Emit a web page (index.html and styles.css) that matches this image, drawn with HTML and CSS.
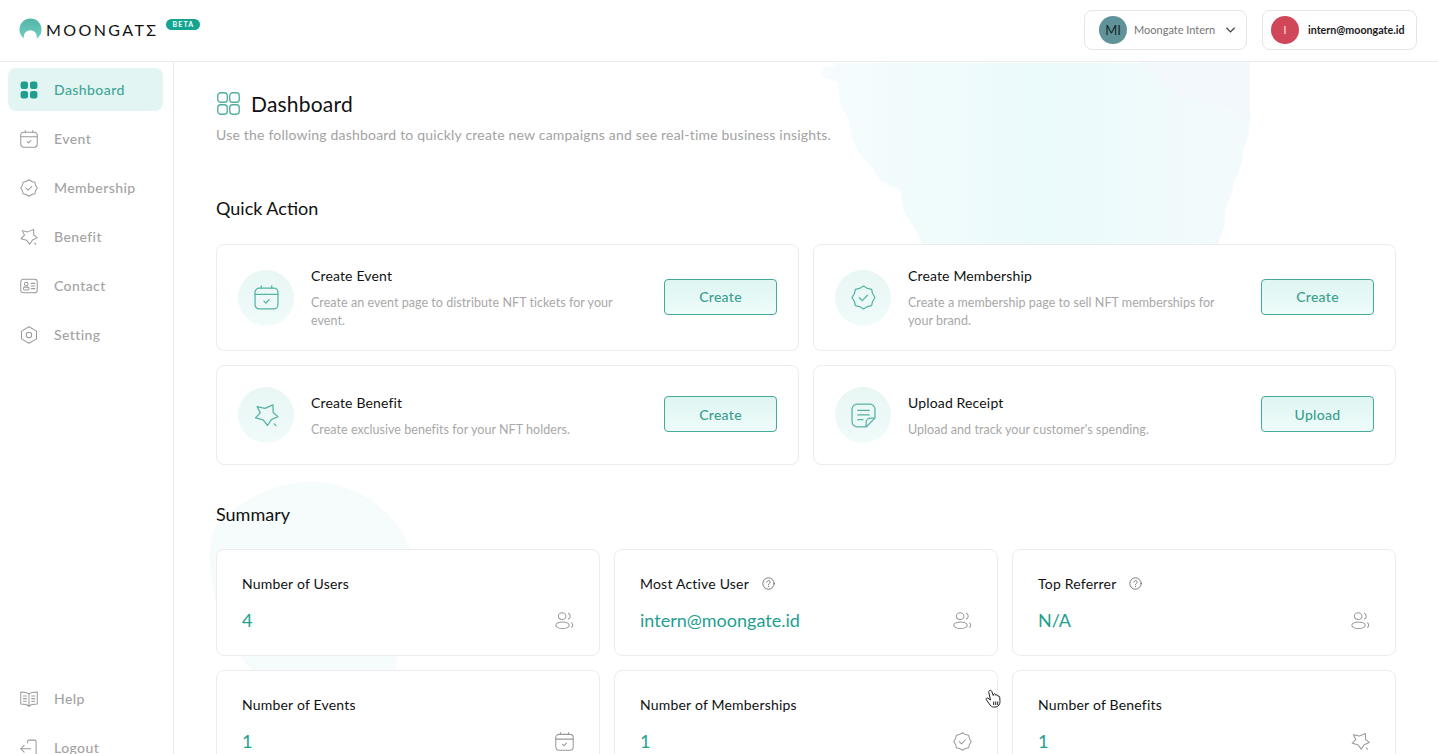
FILE: index.html
```html
<!DOCTYPE html>
<html lang="en">
<head>
<meta charset="utf-8">
<title>Moongate Dashboard</title>
<link rel="stylesheet" href="styles.css">
</head>
<body>
<svg class="sprite" aria-hidden="true">
  <symbol id="i-grid" viewBox="0 0 24 24"><rect x=".8" y=".8" width="9.900" height="9.900" rx="3"/><rect x="13.300" y=".8" width="9.900" height="9.900" rx="3"/><rect x=".8" y="13.300" width="9.900" height="9.900" rx="3"/><rect x="13.300" y="13.300" width="9.900" height="9.900" rx="3"/></symbol>
  <symbol id="i-cal" viewBox="0 0 24 24"><rect x="1" y="3" width="22" height="20" rx="4"/><path d="M1 9h22M7 .8v2.200M17 .8v2.200M9.500 15.500l2 1.800 3-3.200"/></symbol>
  <symbol id="i-badge" viewBox="0 0 24 24"><path d="M12 1 15.800 3.300 19.800 4.200 20.700 8.200 23 12 20.700 15.800 19.800 19.800 15.800 20.700 12 23 8.200 20.700 4.200 19.800 3.300 15.800 1 12 3.300 8.200 4.200 4.200 8.200 3.300Z"/><path d="M8 12.200l2.800 2.800 5-5.200"/></symbol>
  <symbol id="i-star" viewBox="0 0 24 24"><path d="M3 3.500 10.500 5.200 18.200 1.800 18.400 9.200 23 13.200 16.600 16 13 21.600 8.800 16.200 1.500 14.200 6 9.500Z"/><path d="M19.500 20l1.600 1.800"/></symbol>
  <symbol id="i-contact" viewBox="0 0 24 24"><rect x="1" y="3" width="22" height="18" rx="3.500"/><circle cx="8.300" cy="9.300" r="2.400"/><rect x="4.500" y="13.500" width="7.600" height="3.800" rx="1.900"/><path d="M15 8.500h4.800M15 12h4.800M15 15.500h4.800"/></symbol>
  <symbol id="i-hex" viewBox="0 0 24 24"><path d="M12 1 22 6.800V17.200L12 23 2 17.200V6.800Z"/><circle cx="12" cy="12" r="3.600"/></symbol>
  <symbol id="i-book" viewBox="0 0 24 24"><path d="M12 5.500C9.500 3.500 5.500 2.800 1 2.800V18.800C5.500 18.800 9.500 19.500 12 21.800 14.500 19.500 18.500 18.800 23 18.800V2.800C18.500 2.800 14.500 3.500 12 5.500ZM12 5.500V21.800M4.500 8h4M4.500 11.500h4M4.500 15h4M15.500 8h4M15.500 11.500h4M15.500 15h4"/></symbol>
  <symbol id="i-logout" viewBox="0 0 24 24"><path d="M10 5V3.500A2 2 0 0 1 12 1.500H19.500A2 2 0 0 1 21.500 3.500V23M1 13H14M5.500 8.500 1 13 5.500 17.500"/></symbol>
  <symbol id="i-users" viewBox="0 0 24 24"><ellipse cx="9" cy="6.500" rx="4.800" ry="4.200"/><ellipse cx="9.500" cy="18" rx="8.500" ry="4.200"/><path d="M17 2.800a4.200 4.200 0 0 1 0 7.400M21 15a3.500 3.500 0 0 1 0 5.500"/></symbol>
  <symbol id="i-receipt" viewBox="0 0 24 24"><path d="M14.500 23H6A5 5 0 0 1 1 18V6A5 5 0 0 1 6 1H18A5 5 0 0 1 23 6V14.500ZM23 14.500H18.500A4 4 0 0 0 14.500 18.500V23M6.500 7h11M6.500 11.500h11M6.500 16h5"/></symbol>
  <symbol id="i-help" viewBox="0 0 24 24"><circle cx="12" cy="12" r="10.500"/><path d="M9 9.500a3 3 0 1 1 4.500 2.600c-1 .6-1.500 1.200-1.500 2.200M12 17.400v.4"/></symbol>
</svg>

<div class="app">
  <header class="topbar">
    <div class="brand">
      <svg class="brand-mark" viewBox="0 0 24 24"><defs><linearGradient id="mark" x1="0" y1="0" x2="0" y2="1"><stop offset="0" stop-color="#54b4a8"/><stop offset="1" stop-color="#6fd0c3"/></linearGradient></defs><circle cx="12" cy="12" r="11.500" fill="url(#mark)"/><path class="brand-arch" d="M5 24V19.500a6.800 6.800 0 0 1 13.600 0V24Z"/></svg>
      <span class="brand-name">MOONGATΣ</span>
      <span class="brand-beta">BETA</span>
    </div>
    <div class="account">
      <div class="account-box account-org">
        <span class="avatar avatar-org">MI</span>
        <span class="org-name">Moongate Intern</span>
        <svg class="chevron" viewBox="0 0 12 8"><path d="M1.500 1.500 6 6l4.500-4.500"/></svg>
      </div>
      <div class="account-box account-user">
        <span class="avatar avatar-user">I</span>
        <span class="user-mail">intern@moongate.id</span>
      </div>
    </div>
  </header>

  <div class="layout">
    <aside class="sidebar">
      <nav class="nav">
        <a class="nav-item is-active"><svg class="nav-icon solid"><use href="#i-grid"/></svg>Dashboard</a>
        <a class="nav-item"><svg class="nav-icon"><use href="#i-cal"/></svg>Event</a>
        <a class="nav-item"><svg class="nav-icon"><use href="#i-badge"/></svg>Membership</a>
        <a class="nav-item"><svg class="nav-icon"><use href="#i-star"/></svg>Benefit</a>
        <a class="nav-item"><svg class="nav-icon"><use href="#i-contact"/></svg>Contact</a>
        <a class="nav-item"><svg class="nav-icon"><use href="#i-hex"/></svg>Setting</a>
      </nav>
      <nav class="nav nav-bottom">
        <a class="nav-item"><svg class="nav-icon"><use href="#i-book"/></svg>Help</a>
        <a class="nav-item"><svg class="nav-icon"><use href="#i-logout"/></svg>Logout</a>
      </nav>
    </aside>

    <main class="content">
      <svg class="wash wash-top" viewBox="0 0 432 182"><defs><linearGradient id="washA" x1="0" y1="0" x2="1" y2="0"><stop offset="0" stop-color="#f6fcfd"/><stop offset=".5" stop-color="#ebfafb"/><stop offset="1" stop-color="#f3fafc"/></linearGradient></defs><path d="M2 15 3 6 12 5 15 1 430 1 428 30 430 34 428 48 431 50 428 75 424 85 422 100 418 112 414 118 412 131 406 145 404 165 398 182 102 182 96 168 84 150 80 128 60 118 52 105 40 92 32 76 28 55 20 42 18 20Z" fill="url(#washA)"/><path d="M320 0H430V60L410 45 360 35Z" fill="#f3f8fd"/></svg>
      <svg class="wash wash-low" viewBox="0 0 210 195"><path d="M6 55C30 15 80 0 115 2 165 8 195 40 205 70L190 195 50 193C25 170 0 120 6 55Z" fill="#f6fbfc"/></svg>

      <div class="page-title">
        <svg class="title-icon"><use href="#i-grid"/></svg>
        <h1>Dashboard</h1>
      </div>
      <p class="page-lead">Use the following dashboard to quickly create new campaigns and see real-time business insights.</p>

      <h2 class="section-title first">Quick Action</h2>
      <section class="actions">
        <article class="card action">
          <span class="action-icon"><svg><use href="#i-cal"/></svg></span>
          <div class="action-text"><h3>Create Event</h3><p>Create an event page to distribute NFT tickets for your event.</p></div>
          <button class="action-btn">Create</button>
        </article>
        <article class="card action">
          <span class="action-icon"><svg><use href="#i-badge"/></svg></span>
          <div class="action-text"><h3>Create Membership</h3><p>Create a membership page to sell NFT memberships for your brand.</p></div>
          <button class="action-btn">Create</button>
        </article>
        <article class="card action">
          <span class="action-icon"><svg><use href="#i-star"/></svg></span>
          <div class="action-text"><h3>Create Benefit</h3><p>Create exclusive benefits for your NFT holders.</p></div>
          <button class="action-btn">Create</button>
        </article>
        <article class="card action">
          <span class="action-icon"><svg><use href="#i-receipt"/></svg></span>
          <div class="action-text"><h3>Upload Receipt</h3><p>Upload and track your customer's spending.</p></div>
          <button class="action-btn">Upload</button>
        </article>
      </section>

      <h2 class="section-title">Summary</h2>
      <section class="stats">
        <article class="card stat">
          <div class="stat-label">Number of Users</div>
          <div class="stat-row"><span class="stat-value">4</span><svg class="stat-icon"><use href="#i-users"/></svg></div>
        </article>
        <article class="card stat">
          <div class="stat-label">Most Active User<svg class="help-icon"><use href="#i-help"/></svg></div>
          <div class="stat-row"><span class="stat-value">intern@moongate.id</span><svg class="stat-icon"><use href="#i-users"/></svg></div>
        </article>
        <article class="card stat">
          <div class="stat-label">Top Referrer<svg class="help-icon"><use href="#i-help"/></svg></div>
          <div class="stat-row"><span class="stat-value">N/A</span><svg class="stat-icon"><use href="#i-users"/></svg></div>
        </article>
        <article class="card stat">
          <div class="stat-label">Number of Events</div>
          <div class="stat-row"><span class="stat-value">1</span><svg class="stat-icon"><use href="#i-cal"/></svg></div>
        </article>
        <article class="card stat">
          <div class="stat-label">Number of Memberships</div>
          <div class="stat-row"><span class="stat-value">1</span><svg class="stat-icon"><use href="#i-badge"/></svg></div>
        </article>
        <article class="card stat">
          <div class="stat-label">Number of Benefits</div>
          <div class="stat-row"><span class="stat-value">1</span><svg class="stat-icon"><use href="#i-star"/></svg></div>
        </article>
      </section>
    </main>
  </div>

  <svg class="cursor" viewBox="0 0 16 20"><path d="M4.500 1.500c1-.6 2 0 2.300 1l1.500 4 .2-1c.3-1 1.800-1 2.100.1l.2.800c.4-.9 1.700-.8 2 .2l.2.800c.6-.6 1.600-.2 1.700.7l.3 4.400c.1 2.800-1.500 5-4.200 5.500H8.500c-1.500 0-2.600-.7-3.400-2L1.200 10.500c-.5-1 .7-2 1.700-1.300L5.500 11 3.800 3.400c-.2-.8.100-1.500.7-1.900Z"/><path d="M8.700 12.500v3.500M10.700 12.500v3.500M12.700 12.500v3.500"/></svg>
</div>
</body>
</html>
```

FILE: styles.css
```css
* { box-sizing: border-box; }
html, body { margin: 0; height: 100%; overflow: hidden; background: #fff; }
body { font-family: "Lato", "Liberation Sans", sans-serif; color: #111; }
h1, h2, h3, p { margin: 0; font-weight: 400; }
.sprite { display: none; }

.app { position: relative; height: 784px; display: flex; flex-direction: column; }

/* top bar */
.topbar { height: 62px; flex: none; display: flex; align-items: center; justify-content: space-between; padding: 0 21px 2px 19px; border-bottom: 1px solid #ebebeb; background: #fff; }
.brand { display: flex; align-items: center; }
.brand-mark { width: 23px; height: 23px; display: block; }
.brand-arch { fill: #fff; }
.brand-name { margin-left: 4px; font-size: 16px; letter-spacing: 2.4px; font-weight: 400; color: #111; white-space: nowrap; }
.brand-beta { margin: -10px 0 0 8px; width: 34px; height: 11px; border-radius: 6px; background: #12a58f; color: #fff; font-size: 7px; font-weight: 700; letter-spacing: 1.1px; line-height: 11px; text-align: center; }
.account { display: flex; gap: 15px; }
.account-box { height: 40px; display: flex; align-items: center; border: 1px solid #e6e6e6; border-radius: 8px; background: #fff; }
.account-org { width: 163px; padding: 0 10px 0 14px; }
.account-user { width: 155px; padding-left: 8px; }
.avatar { width: 28px; height: 28px; border-radius: 50%; flex: none; display: flex; align-items: center; justify-content: center; font-size: 13px; }
.avatar-org { background: #5f9299; color: #14282b; }
.avatar-user { background: #d0475a; color: #f5d5da; font-size: 12px; }
.org-name { margin-left: 7px; font-size: 11px; color: #757575; white-space: nowrap; }
.chevron { margin-left: auto; width: 11px; height: 8px; fill: none; stroke: #444; stroke-width: 1.4; }
.user-mail { margin-left: 9px; font-size: 10.7px; font-weight: 700; color: #1a1a1a; white-space: nowrap; }

.layout { flex: 1; display: flex; min-height: 0; }

/* sidebar */
.sidebar { width: 174px; flex: none; display: flex; flex-direction: column; justify-content: space-between; padding: 6px 10px 0 8px; border-right: 1px solid #ececec; background: #fff; }
.nav { display: flex; flex-direction: column; gap: 6px; }
.nav-bottom { padding-bottom: 15px; }
.nav-item { height: 43px; display: flex; align-items: center; gap: 16px; padding-left: 12px; border-radius: 8px; font-size: 14px; font-weight: 500; color: #a3a3a3; letter-spacing: .42px; }
.nav-icon { width: 18px; height: 18px; flex: none; fill: none; stroke: #9a9a9a; stroke-width: 1.35; stroke-linejoin: round; stroke-linecap: round; }
.nav-item.is-active { background: #e2f5f2; color: #3fa597; }
.nav-icon.solid { fill: #1f9e8e; stroke: none; }

/* main */
.content { position: relative; flex: 1; min-width: 0; padding: 29px 42px 0 42px; overflow: hidden; }
.wash { position: absolute; display: block; }
.wash-top { left: 646px; top: 0; width: 432px; height: 182px; }
.wash-low { left: 31px; top: 418px; width: 210px; height: 195px; }
.page-title { position: relative; display: flex; align-items: center; gap: 11px; height: 24px; }
.title-icon { width: 23px; height: 23px; flex: none; margin-left: 1px; fill: none; stroke: #4fae9f; stroke-width: 1.4; }
.page-title h1 { font-size: 21px; color: #111; letter-spacing: .2px; }
.page-lead { position: relative; margin-top: 11px; font-size: 14px; line-height: 18px; color: #a3a3a3; white-space: nowrap; letter-spacing: .2px; }
.section-title { position: relative; margin-top: 37px; font-size: 18px; line-height: 24px; color: #111; }
.section-title.first { margin-top: 52px; }

.card { position: relative; background: #fff; border: 1px solid #ececec; border-radius: 8px; }

.actions { position: relative; margin-top: 24px; display: grid; grid-template-columns: 1fr 1fr; gap: 14px; }
.action { display: flex; align-items: center; padding: 21px 21px; }
.action-icon { width: 56px; height: 56px; flex: none; border-radius: 50%; background: linear-gradient(#e8f6f4, #f0fbfa); display: flex; align-items: center; justify-content: center; }
.action-icon svg { width: 25px; height: 25px; fill: none; stroke: #56b3a5; stroke-width: 1.2; stroke-linejoin: round; stroke-linecap: round; }
.action-text { flex: 1; margin: 0 24px 0 17px; }
.action-text h3 { font-size: 14px; line-height: 20px; color: #111; letter-spacing: .15px; }
.action-text p { margin: 8px 0 -1px; font-size: 12.5px; line-height: 18px; color: #a8a8a8; letter-spacing: .05px; }
.action-btn { width: 113px; height: 36px; flex: none; margin-bottom: 2px; border: 1px solid #45a99b; border-radius: 4px; background: linear-gradient(#def5f1, #eefcfa); color: #3b9e90; font: 500 14px "Lato", sans-serif; letter-spacing: .3px; }

.stats { position: relative; margin-top: 23px; display: grid; grid-template-columns: repeat(3, 1fr); gap: 14px; }
.stat { padding: 23px 25px 22px 25px; }
.stat-label { display: flex; align-items: center; height: 20px; font-size: 14px; color: #111; letter-spacing: .2px; }
.help-icon { margin-left: 13px; width: 13px; height: 13px; fill: none; stroke: #666; stroke-width: 1.6; stroke-linecap: round; }
.stat-row { margin-top: 14px; height: 26px; display: flex; align-items: center; justify-content: space-between; }
.stat-value { font-size: 18px; color: #22a08f; }
.stat-icon { width: 19px; height: 19px; fill: none; stroke: #999; stroke-width: 1.3; stroke-linejoin: round; stroke-linecap: round; }

/* recorded pointer over the page */
.cursor { position: absolute; left: 985px; top: 689px; width: 16px; height: 20px; fill: #fff; stroke: #222; stroke-width: 1; stroke-linejoin: round; }
```
